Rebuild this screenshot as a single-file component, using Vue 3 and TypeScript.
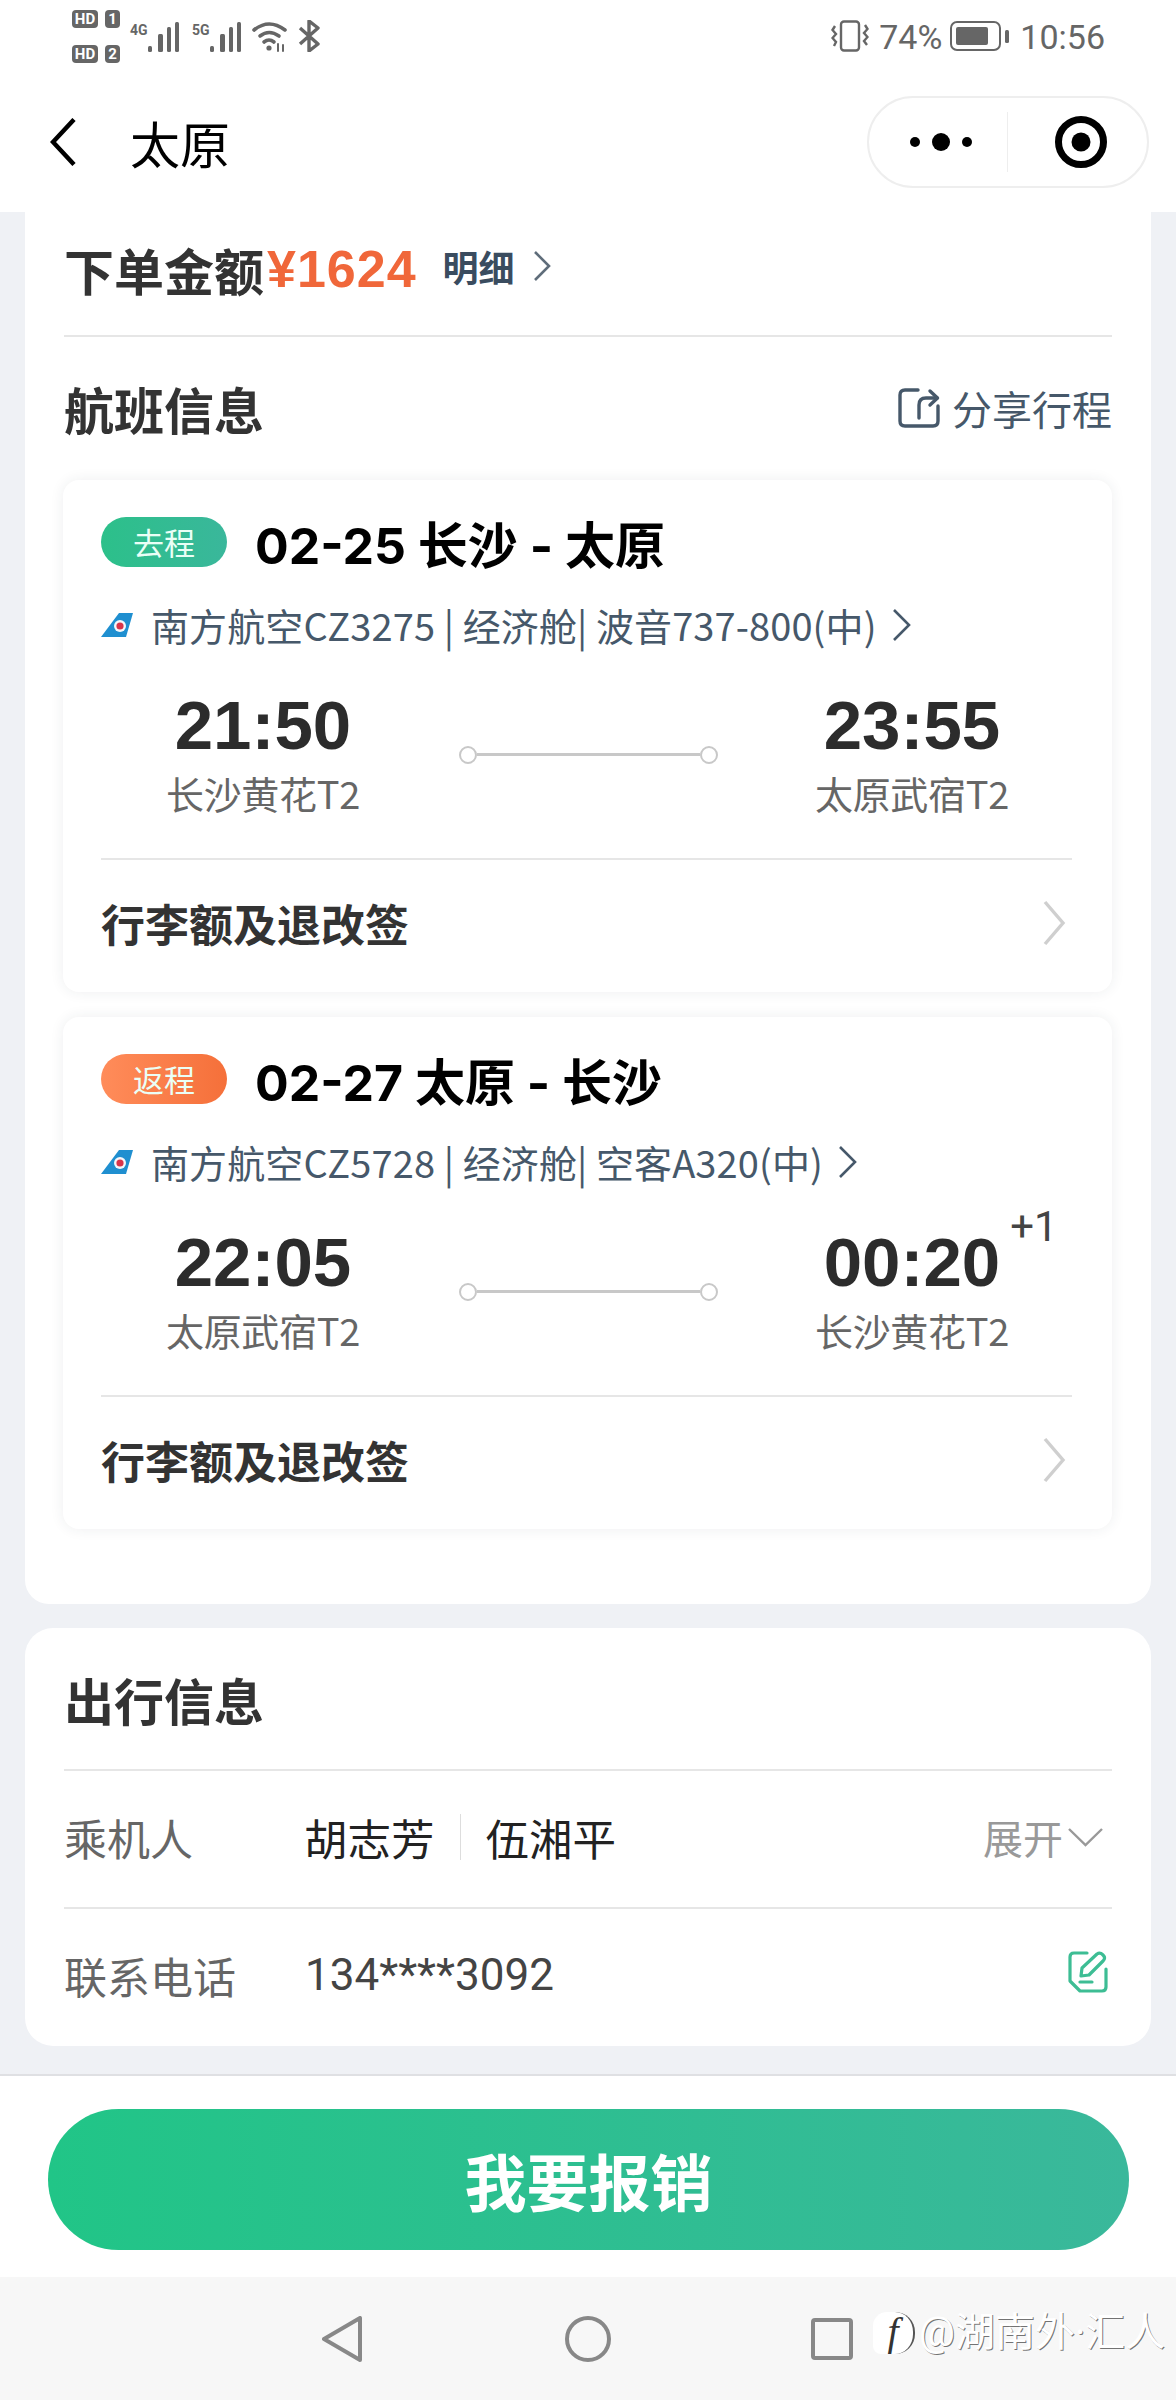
<script setup lang="ts">
interface Flight {
  tag: string
  kind: 'go' | 'back'
  title: string
  airline: string
  depTime: string
  depPort: string
  arrTime: string
  arrPort: string
  plus?: string
}

const flights: Flight[] = [
  {
    tag: '去程',
    kind: 'go',
    title: '02-25 长沙 - 太原',
    airline: '南方航空CZ3275 | 经济舱| 波音737-800(中)',
    depTime: '21:50',
    depPort: '长沙黄花T2',
    arrTime: '23:55',
    arrPort: '太原武宿T2',
  },
  {
    tag: '返程',
    kind: 'back',
    title: '02-27 太原 - 长沙',
    airline: '南方航空CZ5728 | 经济舱| 空客A320(中)',
    depTime: '22:05',
    depPort: '太原武宿T2',
    arrTime: '00:20',
    arrPort: '长沙黄花T2',
    plus: '+1',
  },
]

const signalBars: { x: number; y: number; w: number }[] = [
  { x: 0, y: 24, w: 4 },
  { x: 10, y: 12, w: 5 },
  { x: 19, y: 5, w: 4 },
  { x: 27, y: 0, w: 4 },
]
</script>

<template>
  <div class="screen">
    <div class="status">
      <div class="status-left">
        <div class="hd-col">
          <div class="hd-row"><span class="hd">HD</span><span class="sim">1</span></div>
          <div class="hd-row"><span class="hd">HD</span><span class="sim">2</span></div>
        </div>
        <div class="net">
          <span class="net-label">4G</span>
          <svg class="bars" width="32" height="30" viewBox="0 0 32 30">
            <rect v-for="b in signalBars" :key="b.x" :x="b.x" :y="b.y" :width="b.w" :height="30 - b.y" rx="1.5" fill="#666" />
          </svg>
        </div>
        <div class="net">
          <span class="net-label">5G</span>
          <svg class="bars" width="32" height="30" viewBox="0 0 32 30">
            <rect v-for="b in signalBars" :key="b.x" :x="b.x" :y="b.y" :width="b.w" :height="30 - b.y" rx="1.5" fill="#666" />
          </svg>
        </div>
        <svg class="wifi" width="37" height="31" viewBox="0 0 37 31" fill="none" stroke="#666" stroke-width="3.6" stroke-linecap="round">
          <path d="M2 9 Q17 -3 33 9" />
          <path d="M8 15 Q17 8 27 15" />
          <path d="M12 21 Q17 17 22 21" />
          <circle cx="17" cy="27" r="2.6" fill="#666" stroke="none" />
          <path d="M26 23 v7 M31 24 v6" stroke-width="2" />
        </svg>
        <svg class="bt" width="24" height="32" viewBox="0 0 24 32" fill="none" stroke="#666" stroke-width="3.4" stroke-linejoin="round">
          <path d="M2 8 L20 24 L11 31 L11 1 L20 8 L2 24" />
        </svg>
      </div>
      <div class="status-right">
        <svg width="38" height="32" viewBox="0 0 38 32" fill="none" stroke="#666" stroke-width="2.4">
          <rect x="10" y="1.5" width="18" height="29" rx="3" />
          <path d="M4 6 L1.5 10 L5 14 L1.5 18 L5 22 L3 26" />
          <path d="M34 5 L36.5 9 L33 13 L36.5 17 L33 21 L36 25" />
        </svg>
        <span class="pct">74%</span>
        <svg width="59" height="30" viewBox="0 0 59 30">
          <rect x="1" y="1" width="49" height="28" rx="6" fill="none" stroke="#666" stroke-width="2" />
          <rect x="6" y="6" width="32" height="18" rx="2" fill="#666" />
          <rect x="55" y="9" width="4" height="13" rx="1.5" fill="#666" />
        </svg>
        <span class="clock">10:56</span>
      </div>
    </div>

    <header class="nav">
      <svg class="nav-back" width="26" height="48" viewBox="0 0 26 48" fill="none" stroke="#000" stroke-width="4.5">
        <path d="M24 1.5 L3 24 L24 46.5" />
      </svg>
      <span class="nav-title">太原</span>
      <div class="capsule">
        <div class="cap-side cap-more">
          <i class="dot"></i><i class="dot big"></i><i class="dot"></i>
        </div>
        <div class="cap-side cap-target">
          <svg width="54" height="54" viewBox="0 0 54 54">
            <circle cx="27" cy="27" r="22.5" fill="none" stroke="#000" stroke-width="7" />
            <circle cx="27" cy="27" r="9.5" fill="#000" />
          </svg>
        </div>
      </div>
    </header>

    <main class="content">
      <section class="panel panel-main">
        <div class="price-row">
          <span class="price-label">下单金额</span>
          <span class="price-value">¥1624</span>
          <span class="price-detail">明细</span>
          <svg class="price-arrow" width="18" height="32" viewBox="0 0 18 32" fill="none" stroke="#5f6d7a" stroke-width="2.6">
            <path d="M2 2 L16 16 L2 30" />
          </svg>
        </div>

        <div class="section-head">
          <h2 class="section-title">航班信息</h2>
          <div class="share">
            <svg width="42" height="40" viewBox="0 0 42 40" fill="none" stroke="#46586a" stroke-width="3.4" stroke-linecap="round" stroke-linejoin="round">
              <path d="M20 2 H7 Q2 2 2 7 V33 Q2 38 7 38 H35 Q40 38 40 33 V18" />
              <path d="M21 30 V17 Q21 10 28 10 H39" />
              <path d="M32 3 L39.5 10 L32 17" />
            </svg>
            <span>分享行程</span>
          </div>
        </div>

        <div class="flights">
          <article v-for="f in flights" :key="f.title" class="flight">
            <div class="flight-head">
              <span class="tag" :class="f.kind">{{ f.tag }}</span>
              <span class="flight-title">{{ f.title }}</span>
            </div>
            <div class="airline">
              <svg width="32" height="24" viewBox="0 0 32 24">
                <polygon points="18,0 32,0 25,24 0,24" fill="#1f8fd0" />
                <circle cx="19" cy="13" r="6" fill="#f4f6fa" />
                <circle cx="19" cy="13" r="3.6" fill="#d8344a" />
              </svg>
              <span class="airline-text">{{ f.airline }}</span>
              <svg width="20" height="34" viewBox="0 0 20 34" fill="none" stroke="#46586a" stroke-width="2.6">
                <path d="M3 2 L18 17 L3 32" />
              </svg>
            </div>
            <div class="times">
              <div class="point">
                <span class="time">{{ f.depTime }}</span>
                <span class="port">{{ f.depPort }}</span>
              </div>
              <div class="route">
                <i class="node"></i><i class="wire"></i><i class="node"></i>
              </div>
              <div class="point">
                <span class="time">
                  {{ f.arrTime }}<sup v-if="f.plus" class="plus">{{ f.plus }}</sup>
                </span>
                <span class="port">{{ f.arrPort }}</span>
              </div>
            </div>
            <div class="bag">
              <span>行李额及退改签</span>
              <svg width="24" height="46" viewBox="0 0 24 46" fill="none" stroke="#cfcfcf" stroke-width="3.4">
                <path d="M3 2 L21 23 L3 44" />
              </svg>
            </div>
          </article>
        </div>
      </section>

      <section class="panel panel-trip">
        <h2 class="trip-title">出行信息</h2>
        <div class="info-row">
          <span class="info-label">乘机人</span>
          <div class="names">
            <span>胡志芳</span>
            <i class="name-sep"></i>
            <span>伍湘平</span>
          </div>
          <span class="expand">展开</span>
          <svg width="35" height="20" viewBox="0 0 35 20" fill="none" stroke="#999" stroke-width="2.4">
            <path d="M1 2 L17.5 18 L34 2" />
          </svg>
        </div>
        <div class="info-row">
          <span class="info-label">联系电话</span>
          <span class="phone">134****3092</span>
          <svg class="edit" width="40" height="42" viewBox="0 0 40 42" fill="none" stroke="#3dbd94" stroke-width="3.2" stroke-linecap="round" stroke-linejoin="round">
            <path d="M19 2 H6 Q2 2 2 6 V30 L12 40 H34 Q38 40 38 36 V18" />
            <path d="M13 25 L14 17 L29 3 Q32 1 35 4 Q38 7 35 10 L21 24 Z" />
            <path d="M12 31 H24" />
          </svg>
        </div>
      </section>
    </main>

    <footer class="action">
      <button class="submit" type="button">我要报销</button>
    </footer>

    <nav class="sysnav">
      <svg width="40" height="46" viewBox="0 0 40 46" fill="none" stroke="#888" stroke-width="4" stroke-linejoin="round">
        <path d="M38 2 V44 L2 23 Z" />
      </svg>
      <svg width="46" height="46" viewBox="0 0 46 46" fill="none" stroke="#888" stroke-width="4">
        <circle cx="23" cy="23" r="21" />
      </svg>
      <svg width="42" height="42" viewBox="0 0 42 42" fill="none" stroke="#888" stroke-width="4">
        <rect x="2" y="2" width="38" height="38" rx="2" />
      </svg>
      <div class="watermark">
        <span class="wm-logo">f</span>
        <span class="wm-text">@湖南外·汇人</span>
      </div>
    </nav>
  </div>
</template>

<style scoped>
.screen {
  position: relative;
  width: 1176px;
  height: 2400px;
  display: flex;
  flex-direction: column;
  background: #eff1f5;
  font-family: "Noto Sans CJK SC", "Noto Sans", sans-serif;
  color: #333;
  overflow: hidden;
}

/* status bar */
.status {
  height: 84px;
  flex: none;
  box-sizing: border-box;
  padding: 0 71px 12px 72px;
  display: flex;
  align-items: center;
  justify-content: space-between;
  background: #fff;
  color: #666;
}
.status-left,
.status-right {
  display: flex;
  align-items: center;
}
.hd-col {
  display: flex;
  flex-direction: column;
  gap: 17px;
  margin-right: 10px;
}
.hd-row {
  display: flex;
  gap: 7px;
  height: 18px;
}
.hd,
.sim {
  background: #666;
  color: #fff;
  font: 700 15px/18px "Roboto", sans-serif;
  text-align: center;
  border-radius: 4px;
}
.hd {
  width: 26px;
}
.sim {
  width: 15px;
}
.net {
  display: flex;
  align-items: flex-start;
  width: 62px;
}
.net-label {
  font: 700 14px/14px "Roboto", sans-serif;
  width: 18px;
  color: #666;
  margin-top: 2px;
}
.bars {
  margin-top: 1px;
}
.wifi {
  margin-left: -2px;
}
.bt {
  margin-left: 9px;
}
.status-right {
  font: 400 34px/40px "Roboto", sans-serif;
}
.pct {
  margin: 2px 8px 0 10px;
}
.clock {
  margin: 2px 0 0 11px;
}

/* navigation */
.nav {
  height: 128px;
  flex: none;
  box-sizing: border-box;
  padding: 0 27px 12px 50px;
  display: flex;
  align-items: center;
  background: #fff;
}
.nav-title {
  font-size: 50px;
  line-height: 60px;
  color: #000;
  margin-left: 54px;
  flex: 1;
}
.capsule {
  width: 282px;
  height: 92px;
  box-sizing: border-box;
  border: 2px solid #eeeeee;
  border-radius: 46px;
  display: flex;
  align-items: center;
}
.cap-side {
  height: 60px;
  display: flex;
  align-items: center;
  justify-content: center;
}
.cap-more {
  width: 139px;
  box-sizing: border-box;
  padding-left: 5px;
  gap: 12px;
  border-right: 1px solid #eeeeee;
}
.cap-target {
  flex: 1;
  padding-left: 6px;
}
.dot {
  width: 10px;
  height: 10px;
  border-radius: 50%;
  background: #000;
}
.dot.big {
  width: 18px;
  height: 18px;
}

/* content */
.content {
  flex: 1;
  min-height: 0;
  padding: 0 25px;
  display: flex;
  flex-direction: column;
  gap: 24px;
}
.panel {
  background: #fff;
  box-sizing: border-box;
  padding: 0 39px;
}
.panel-main {
  height: 1392px;
  border-radius: 0 0 24px 24px;
}
.panel-trip {
  height: 418px;
  border-radius: 28px;
}

.price-row {
  height: 125px;
  box-sizing: border-box;
  padding-bottom: 10px;
  border-bottom: 2px solid #e6e6e6;
  display: flex;
  align-items: center;
}
.price-label {
  font-size: 50px;
  font-weight: 700;
  color: #333;
}
.price-value {
  font: 700 52px/60px "Liberation Sans", sans-serif;
  color: #f0673a;
  margin-left: 3px;
  letter-spacing: 1px;
}
.price-detail {
  font-size: 36px;
  font-weight: 700;
  color: #3a4c5f;
  margin: 0 18px 6px 26px;
}
.price-arrow {
  margin-bottom: 6px;
}

.section-head {
  height: 143px;
  box-sizing: border-box;
  padding: 0 0 2px;
  display: flex;
  align-items: center;
  justify-content: space-between;
}
.section-title {
  margin: 0;
  font-size: 50px;
  line-height: 60px;
  font-weight: 700;
  color: #333;
}
.share {
  display: flex;
  align-items: center;
  gap: 12px;
  font-size: 40px;
  color: #46586a;
}

.flights {
  display: flex;
  flex-direction: column;
  gap: 25px;
  width: 1049px;
  margin-left: -1px;
}
.flight {
  height: 512px;
  box-sizing: border-box;
  padding: 37px 40px 0 38px;
  background: #fff;
  border-radius: 16px;
  box-shadow: 0 0 14px rgba(40, 50, 70, 0.08);
  display: flex;
  flex-direction: column;
}
.flight-head {
  height: 50px;
  display: flex;
  align-items: center;
  gap: 28px;
}
.tag {
  width: 126px;
  height: 50px;
  border-radius: 25px;
  text-align: center;
  font-size: 31px;
  line-height: 50px;
  color: #eafff6;
}
.tag.go {
  background: linear-gradient(90deg, #2cc08a, #3ab79b);
}
.tag.back {
  background: linear-gradient(90deg, #ff8c5a, #f5703a);
}
.flight-title {
  font-family: "Inter", "Noto Sans CJK SC", sans-serif;
  font-size: 50px;
  line-height: 56px;
  font-weight: 700;
  color: #000;
  padding-top: 8px;
}
.airline {
  margin-top: 38px;
  height: 40px;
  display: flex;
  align-items: center;
}
.airline-text {
  margin: 0 14px 0 18px;
  font-size: 38px;
  line-height: 40px;
  letter-spacing: 0.1px;
  color: #46586a;
  white-space: nowrap;
}
.times {
  margin-top: 46px;
  display: grid;
  grid-template-columns: 324px 1fr 320px;
  align-items: center;
}
.point {
  display: flex;
  flex-direction: column;
  align-items: center;
  gap: 7px;
}
.time {
  position: relative;
  font: 700 69px/70px "Liberation Sans", sans-serif;
  color: #2c2c2c;
}
.plus {
  position: absolute;
  left: 100%;
  top: -23px;
  margin-left: 10px;
  font: 400 42px/44px "Roboto", sans-serif;
  color: #444;
}
.port {
  font-size: 38px;
  line-height: 50px;
  color: #666;
  letter-spacing: -0.3px;
}
.route {
  display: flex;
  align-items: center;
  justify-content: center;
}
.node {
  width: 14px;
  height: 14px;
  border: 2px solid #c8c8c8;
  border-radius: 50%;
  flex: none;
}
.wire {
  width: 223px;
  height: 3px;
  background: #c8c8c8;
}
.bag {
  margin-top: 40px;
  flex: 1;
  box-sizing: border-box;
  border-top: 2px solid #e6e6e6;
  display: flex;
  align-items: center;
  justify-content: space-between;
  padding: 0 6px 6px 0;
  font-size: 44px;
  font-weight: 700;
  color: #333;
}

.trip-title {
  margin: 0;
  height: 141px;
  box-sizing: border-box;
  padding-top: 0;
  display: flex;
  align-items: center;
  font-size: 50px;
  font-weight: 700;
  color: #333;
}
.info-row {
  height: 138px;
  box-sizing: border-box;
  border-top: 2px solid #e6e6e6;
  display: flex;
  align-items: center;
  font-size: 43px;
  padding: 0 9px 4px 0;
}
.edit {
  margin: -6px -5px 0 0;
}
.info-label {
  width: 240px;
  flex: none;
  color: #666;
}
.names {
  flex: 1;
  display: flex;
  align-items: center;
  color: #222;
  font-size: 43.5px;
}
.name-sep {
  width: 1px;
  height: 46px;
  background: #ddd;
  margin: 0 25px;
}
.expand {
  font-size: 40px;
  color: #999;
  margin-right: 5px;
}
.phone {
  flex: 1;
  color: #444;
  font-family: "Roboto", "Noto Sans CJK SC", sans-serif;
  font-size: 44px;
  padding-left: 1px;
}

/* footer */
.action {
  height: 203px;
  flex: none;
  box-sizing: border-box;
  border-top: 2px solid #dfe0e3;
  background: #fff;
  padding: 33px 47px 0 48px;
}
.submit {
  display: block;
  width: 100%;
  height: 141px;
  border: 0;
  padding: 0;
  border-radius: 71px;
  background: linear-gradient(90deg, #21c587, #3ab89b);
  color: #fff;
  font-family: inherit;
  font-size: 62px;
  font-weight: 700;
}

.sysnav {
  position: relative;
  height: 123px;
  flex: none;
  box-sizing: border-box;
  background: #f7f7f7;
  padding-left: 322px;
  display: flex;
  align-items: center;
}
.sysnav svg:nth-child(2) {
  margin-left: 203px;
}
.sysnav svg:nth-child(3) {
  margin-left: 200px;
}
.watermark {
  position: absolute;
  left: 873px;
  top: 32px;
  display: flex;
  align-items: center;
  color: #fff;
}
.wm-logo {
  width: 42px;
  height: 42px;
  border-radius: 14px 20px 20px 8px;
  background: #fff;
  border-right: 2px solid #555;
  box-sizing: border-box;
  text-align: center;
  font: italic 400 40px/40px "Liberation Serif", serif;
  color: #333;
}
.wm-text {
  margin-left: 4px;
  font-family: "Roboto", "Noto Sans CJK SC", sans-serif;
  font-size: 40px;
  line-height: 48px;
  white-space: nowrap;
  text-shadow: 1px 1px 0 rgba(0, 0, 0, 0.55);
}
</style>
